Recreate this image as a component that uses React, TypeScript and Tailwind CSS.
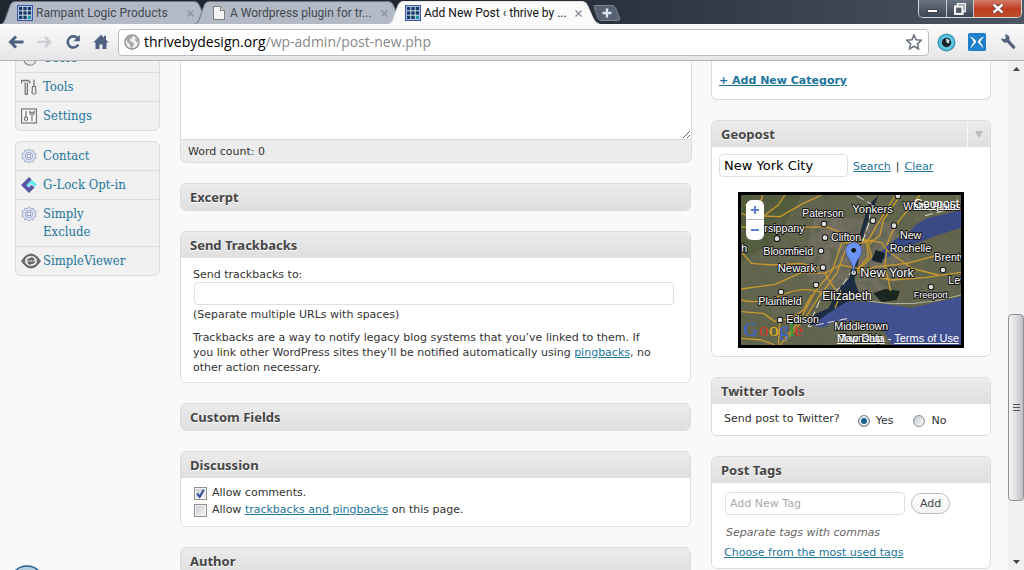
import { useState, type ReactNode } from "react";

const link = "text-[#21759b] underline";

function GridFavicon() {
  return (
    <svg className="h-4 w-4 shrink-0" viewBox="0 0 16 16" aria-hidden="true">
      <rect width="16" height="16" fill="#3a5ba8" />
      <rect x="1.3" y="1.3" width="13.4" height="13.4" fill="#e8eef6" />
      {[2, 6.3, 10.6].map((y) =>
        [2, 6.3, 10.6].map((x) => (
          <rect key={`${x}-${y}`} x={x} y={y} width="3.400" height="3.400" fill={x > 10 && y > 10 ? "#1c9aa8" : "#143a6b"} />
        )),
      )}
    </svg>
  );
}

function PageFavicon() {
  return (
    <svg className="h-4 w-4 shrink-0" viewBox="0 0 16 16" aria-hidden="true">
      <path d="M2.500 1.500h7l4 4v9h-11z" fill="#f4f4f4" stroke="#7d7d7d" />
      <path d="M9.500 1.500v4h4" fill="#d8d8d8" stroke="#7d7d7d" />
    </svg>
  );
}

function Tab({ icon, title, active }: { icon: ReactNode; title: string; active?: boolean }) {
  return (
    <div className={`relative -mr-[18px] flex h-6 w-[212px] shrink-0 items-center pt-0.5 pr-3.5 pl-[17px] ${active ? "z-10" : ""}`}>
      <svg className="absolute inset-0 h-6 w-[212px]" viewBox="0 0 212 24" aria-hidden="true">
        <path
          d="M0 24.5C4 23.5 4.500 21 6 17L10 5.500Q11.500 1.500 15 1.500H194Q198 1.500 199.500 5.500L205 18Q207.500 23.500 212 24.500Z"
          fill={active ? "#fbfbfb" : "#b3bac6"}
          stroke={active ? "#e4e6ea" : "#6d7683"}
        />
      </svg>
      <span className="relative flex">{icon}</span>
      <span className={`relative ml-[3px] min-w-0 flex-1 truncate font-['Roboto',sans-serif] text-[12px] leading-4 ${active ? "text-[#111]" : "text-[#43484f]"}`}>
        {title}
      </span>
      <button type="button" aria-label={`Close ${title}`} className="relative flex h-4 w-4 items-center justify-center">
        <svg className="h-[7px] w-[7px]" viewBox="0 0 7 7">
          <path d="M.5.5l6 6M6.500.5l-6 6" stroke="#8d939d" strokeWidth="1.500" />
        </svg>
      </button>
    </div>
  );
}

function WindowButtons() {
  return (
    <div className="flex h-[18px] overflow-hidden rounded-b-[5px] border border-t-0 border-[#d3d7dc]">
      <button type="button" aria-label="Minimize" className="flex w-7 items-end justify-center border-r border-[#c5cad1] bg-linear-to-b from-[#69737f] to-[#3d4753] pb-1">
        <span className="block h-1 w-[11px] border border-[#444] bg-white" />
      </button>
      <button type="button" aria-label="Restore" className="flex w-[27px] items-center justify-center border-r border-[#c5cad1] bg-linear-to-b from-[#69737f] to-[#3d4753]">
        <svg className="h-3 w-3" viewBox="0 0 12 12">
          <path d="M3.500 3V.8h7.700v7.700H9" fill="none" stroke="#f4f4f4" strokeWidth="1.500" />
          <rect x="1" y="3.500" width="7.500" height="7.500" fill="none" stroke="#f4f4f4" strokeWidth="2.200" />
        </svg>
      </button>
      <button type="button" aria-label="Close" className="flex w-[47px] items-center justify-center bg-linear-to-b from-[#cf7a68] via-[#c03f22] to-[#bf4a2c]">
        <svg className="h-[11px] w-3" viewBox="0 0 12 11">
          <path d="M1.500 1.500l9 8M10.500 1.500l-9 8" stroke="#5b3a38" strokeWidth="4" />
          <path d="M1.500 1.500l9 8M10.500 1.500l-9 8" stroke="#fff" strokeWidth="2.400" />
        </svg>
      </button>
    </div>
  );
}

function TitleBar() {
  return (
    <div className="flex h-6 shrink-0 bg-linear-to-r from-[#20262f] via-[#232a34] to-[#4b5663]">
      <Tab icon={<GridFavicon />} title="Rampant Logic Products" />
      <Tab icon={<PageFavicon />} title="A Wordpress plugin for tr..." />
      <Tab icon={<GridFavicon />} title="Add New Post ‹ thrive by ..." active />
      <button type="button" aria-label="New tab" className="ml-[11px] mt-[5px] flex h-4 w-7">
        <svg className="h-4 w-7" viewBox="0 0 28 16">
          <path d="M1 1.500Q1 .5 2 .5H19Q21.500.5 22.500 3L26.500 12.500Q27.500 15.500 25 15.500H8Q6 15.500 5 13.500Z" fill="#566272" stroke="#7a8593" />
          <path d="M14 3.500v9M9.500 8h9" stroke="#dfe5ee" strokeWidth="2.400" />
        </svg>
      </button>
      <div className="flex-1" />
      <div className="pr-0.5">
        <WindowButtons />
      </div>
    </div>
  );
}

function ToolButton({ label, children, className }: { label: string; children: ReactNode; className?: string }) {
  return (
    <button type="button" aria-label={label} className={`flex h-4 w-4 shrink-0 items-center justify-center ${className ?? ""}`}>
      <svg className="h-4 w-4" viewBox="0 0 16 16">
        {children}
      </svg>
    </button>
  );
}

function Toolbar() {
  return (
    <div className="flex h-[37px] shrink-0 items-center border-b border-[#b3b3ba] bg-linear-to-b from-[#fbfbfb] to-[#e6e6e8] pr-2 pl-2">
      <ToolButton label="Back">
        <path d="M8 2.500L2.500 8 8 13.500M3 8h12.500" fill="none" stroke="#4f6080" strokeWidth="3" />
      </ToolButton>
      <ToolButton label="Forward" className="ml-[13px]">
        <path d="M8 3l5 5-5 5M13 8H.5" fill="none" stroke="#cbced3" strokeWidth="2.600" />
      </ToolButton>
      <ToolButton label="Reload" className="ml-3">
        <path d="M12.500 4.200A5.600 5.600 0 1 0 13.300 10.500" fill="none" stroke="#4f6080" strokeWidth="2.600" />
        <path d="M14.800.8v6.400H8.400z" fill="#4f6080" />
      </ToolButton>
      <ToolButton label="Home" className="ml-3">
        <path d="M8 .8L.3 8.500H2.500V15H6.500V10.500H9.500V15H13.500V8.500H15.700L13 5.800V1.800H11V3.800z" fill="#4f6080" />
      </ToolButton>
      <div className="ml-[9px] flex h-[27px] min-w-0 flex-1 items-center rounded border border-[#b9bcc4] bg-white pr-1.5 pl-[5px]">
        <svg className="h-4 w-4 shrink-0" viewBox="0 0 16 16" aria-hidden="true">
          <circle cx="8" cy="8" r="7" fill="#f2f2f2" stroke="#8f8f8f" strokeWidth="1.400" />
          <path d="M2 4.500L5 1.800 9 1.500 8 4 5.800 5.500 6.500 7.500 9.500 8.500 10 10.500 8 14 6.500 13.500 6 10.500 3.500 8.500ZM11 3L14 6 13.500 9 11.500 7Z" fill="#a9a9a9" />
        </svg>
        <div role="textbox" aria-label="Address" className="ml-1 min-w-0 flex-1 truncate font-['Open_Sans',sans-serif] text-[14px] leading-6 text-[#8a8a8a]">
          <span className="text-black">thrivebydesign.org</span>/wp-admin/post-new.php
        </div>
        <ToolButton label="Bookmark this page">
          <path d="M8 1l2.100 4.800 5.200.5-3.900 3.500 1.100 5.100L8 12.200l-4.500 2.700 1.100-5.100L.7 6.300l5.200-.5z" fill="#fff" stroke="#6d7483" strokeWidth="1.600" />
        </ToolButton>
      </div>
      <button type="button" aria-label="Eye extension" className="ml-2 h-[19px] w-[19px] shrink-0">
        <svg viewBox="0 0 19 19">
          <circle cx="9.500" cy="9.500" r="9" fill="#3b96b5" />
          <circle cx="9.500" cy="9.500" r="7.500" fill="#5cc7e4" />
          <circle cx="9.500" cy="9.500" r="4.700" fill="#20242a" />
          <path d="M9 5.500L12.500 7 12 10.500 9.500 9.500Z" fill="#c9e6ee" />
        </svg>
      </button>
      <button type="button" aria-label="Butterfly extension" className="ml-3 h-[18px] w-[18px] shrink-0">
        <svg viewBox="0 0 18 18">
          <rect width="18" height="18" rx="1.500" fill="#1e81c9" />
          <path d="M1.500 3.500Q6.500 4.500 8.300 9L2.500 15.500Q3.500 11.500 5.800 9.300 4.500 5.500 1.500 3.500ZM16.500 3.500Q11.500 4.500 9.700 9L15.500 15.500Q14.500 11.500 12.200 9.300 13.500 5.500 16.500 3.500Z" fill="#fff" />
        </svg>
      </button>
      <ToolButton label="Settings menu" className="ml-[14px]">
        <path d="M1 4.300L4.500 5.300 6 3.500 4.700.6Q8.500.2 9.500 3.500L9.300 6 15.200 12.500Q15.600 14.800 13.200 15L7 8.600Q2.500 9.500 1 4.300Z" fill="#56627b" />
      </ToolButton>
    </div>
  );
}

const cog = (
  <svg className="h-4 w-4" viewBox="0 0 16 16">
    <path d="M8 .8L9.800 2.700 12.300 2.200 12.900 4.600 15.200 5.800 14 8 15.200 10.200 12.900 11.400 12.300 13.800 9.800 13.300 8 15.200 6.200 13.300 3.700 13.800 3.100 11.400.8 10.200 2 8 .8 5.800 3.100 4.600 3.700 2.200 6.200 2.700Z" fill="#dfe4f2" stroke="#9aa6cc" strokeWidth=".9" />
    <circle cx="8" cy="8" r="3.700" fill="#eef1f9" stroke="#9aa6cc" strokeWidth=".9" />
    <rect x="6.300" y="6.300" width="3.400" height="3.400" fill="#fff" stroke="#8795c2" strokeWidth=".9" />
  </svg>
);

const menuGroups: { label: string; icon: ReactNode }[][] = [
  [
    {
      label: "Users",
      icon: (
        <svg className="h-4 w-4" viewBox="0 0 16 16">
          <circle cx="9" cy="5" r="3.500" fill="#eee" stroke="#888" />
          <path d="M3 11Q4 8.500 9.500 8.500 15 8.500 14 13 12 15.500 9 15.200 5 15 3 11Z" fill="#e8e8e8" stroke="#888" strokeWidth="1.200" />
        </svg>
      ),
    },
    {
      label: "Tools",
      icon: (
        <svg className="h-4 w-4" viewBox="0 0 16 16">
          <path d="M.6 4.500V1.500H7.500L9.500 4M4.200 3.500V15.500M6.400 3.500V15.500H4.200M13 .5V7" fill="none" stroke="#777" strokeWidth="1.300" />
          <path d="M11.500 7.500H14.500L15 14Q13 16.500 11 14Z" fill="#eee" stroke="#777" strokeWidth="1.200" />
        </svg>
      ),
    },
    {
      label: "Settings",
      icon: (
        <svg className="h-4 w-4" viewBox="0 0 16 16">
          <rect x=".6" y="1" width="14.800" height="14" fill="#f8f8f8" stroke="#777" strokeWidth="1.200" />
          <path d="M5 3V9M11 13V8" stroke="#777" strokeWidth="1.300" />
          <circle cx="5" cy="10.800" r="1.700" fill="none" stroke="#777" strokeWidth="1.200" />
          <path d="M8.800 3.500Q8.500 7 11 7 13.500 7 13.200 3.500L11 5Z" fill="none" stroke="#777" strokeWidth="1.200" />
        </svg>
      ),
    },
  ],
  [
    { label: "Contact", icon: cog },
    {
      label: "G-Lock Opt-in",
      icon: (
        <svg className="h-4 w-4" viewBox="0 0 16 16">
          <path d="M8 0L0 8 8 16 13.500 10.500 10.500 7.800 8 10.500 5.500 8 10.800 2.800Z" fill="#5658a6" />
          <path d="M11 3L5.500 8.200 7 9.700 10.500 6.500 13.500 9.800 16 7.500Z" fill="#5ceaf0" />
        </svg>
      ),
    },
    { label: "Simply Exclude", icon: cog },
    {
      label: "SimpleViewer",
      icon: (
        <svg className="h-4 w-5" viewBox="0 0 20 16">
          <path d="M0 8Q5 .5 10 .5T20 8Q15 15.500 10 15.500T0 8Z" fill="#6a6a6a" />
          <ellipse cx="10" cy="8" rx="6" ry="5" fill="#f0f0f0" />
          <path d="M5.500 8.500Q6.500 4.500 10.500 4.700L10.300 3.500 14 6.200 10.800 8.800 10.700 7.300Q8 7 5.500 8.500ZM14.500 7.500Q13.500 11.500 9.500 11.300L9.700 12.500 6 9.800 9.200 7.200 9.300 8.700Q12 9 14.500 7.500Z" fill="#666" />
        </svg>
      ),
    },
  ],
];

function AdminMenu() {
  return (
    <nav className="-mt-[18px] flex w-[145px] shrink-0 flex-col gap-[10px]">
      {menuGroups.map((group, i) => (
        <ul key={i} className="divide-y divide-[#dcdcdc] overflow-hidden rounded-md border border-[#dcdcdc] bg-[#f1f1f1]">
          {group.map((item) => (
            <li key={item.label} className="flex px-[5px] py-[5px]">
              <span className="flex h-[18px] w-[22px] shrink-0 items-center">{item.icon}</span>
              <a href="#" className="max-w-[90px] font-['DejaVu_Serif_Condensed','DejaVu_Serif',serif] text-[13px] leading-[18px] text-[#21759b]">
                {item.label}
              </a>
            </li>
          ))}
        </ul>
      ))}
    </nav>
  );
}

function Box({ title, toggle, children }: { title: string; toggle?: boolean; children?: ReactNode }) {
  return (
    <section className="overflow-hidden rounded-md border border-[#dcdcdc] bg-white">
      <header className="flex bg-linear-to-b from-[#ececec] to-[#dfdfdf]">
        <h3 className="flex-1 pl-[9px] font-['Noto_Sans',sans-serif] text-[13px] leading-[26px] font-bold text-[#464646] [text-shadow:0_1px_0_#fff]">{title}</h3>
        {toggle && (
          <button type="button" aria-label="Toggle panel" className="flex w-[23px] items-center justify-center border-l border-[#f8f8f8]">
            <svg className="h-[7px] w-2" viewBox="0 0 8 7">
              <path d="M0 0h8L4 7z" fill="#bbb" />
            </svg>
          </button>
        )}
      </header>
      {children}
    </section>
  );
}

const field = "h-[23px] rounded border border-[#dfdfdf] bg-white px-1";

function Editor() {
  const [words, setWords] = useState(0);
  return (
    <div className="-mr-px overflow-hidden rounded-b-md border border-t-0 border-[#dcdcdc]">
      <textarea
        aria-label="Post content"
        className="block h-[78px] w-full resize-y bg-white p-2 outline-none"
        onChange={(e) => setWords(e.target.value.split(/\s+/).filter(Boolean).length)}
      />
      <div className="border-t border-[#dcdcdc] bg-[#ececec] px-[7px] pt-0.5 leading-5">Word count: {words}</div>
    </div>
  );
}

function CheckRow({ id, checked, children }: { id: string; checked?: boolean; children: ReactNode }) {
  return (
    <div className="flex items-center leading-[17px]">
      <span className="relative mt-0.5 ml-px flex">
        <input
          id={id}
          type="checkbox"
          defaultChecked={checked}
          className="peer h-[13px] w-[13px] appearance-none border border-[#8e8f8f] bg-linear-to-br from-[#c3c8d1] to-[#fbfbfb] shadow-[inset_0_0_0_1px_#f4f4f4]"
        />
        <svg className="pointer-events-none absolute inset-0 hidden h-[13px] w-[13px] peer-checked:block" viewBox="0 0 13 13" aria-hidden="true">
          <path d="M3.200 6.500L5.700 9.800 9.800 2.800" fill="none" stroke="#3b5599" strokeWidth="2.200" />
        </svg>
      </span>
      <label htmlFor={id} className="ml-[5px]">{children}</label>
    </div>
  );
}

const radioClass =
  "h-3 w-3 appearance-none rounded-full border border-[#8e8f8f] bg-linear-to-br from-[#c3c8d1] to-[#fbfbfb] checked:bg-none checked:bg-[#17638f] checked:shadow-[inset_0_0_0_2px_#e9eef2]";

const roads = [
  "M180 30L160 60 120 90 80 95 48 85",
  "M290 30L235 55 165 95 80 92",
  "M48 125L115 135 230 128 305 125 340 140 420 165 470 172",
  "M48 200L80 235 140 240 230 235 290 250",
  "M48 312L150 298 230 262 300 265 345 240 400 250",
  "M48 345Q100 360 170 330T300 325 345 315",
  "M48 380L115 385 150 410 200 400 235 375 260 330",
  "M430 165L350 175 320 260 270 320 225 405 165 480",
  "M445 165L365 185 335 265 285 330 240 400 180 470",
  "M520 40L475 105 465 150 430 180 440 215 410 245 392 262",
  "M512 30L450 130 425 175 430 215 400 250",
  "M585 30L520 110 500 145 485 180",
  "M470 172L485 195 480 240 497 318",
  "M398 262L455 245 545 235 640 210 708 222",
  "M405 265L500 285 600 278 708 262",
  "M485 195L560 250 640 270",
  "M110 30Q120 55 60 60",
  "M300 262Q310 290 345 330L330 370",
  "M165 400L160 480",
  "M48 460L110 465 150 480",
];

const cities: { name: string; x: number; y: number; size: number; dot?: [number, number] }[] = [
  { name: "Paterson", x: 232, y: 96, size: 31, dot: [297, 117] },
  { name: "Yonkers", x: 382, y: 85, size: 34, dot: [444, 107] },
  { name: "White Plains", x: 535, y: 74, size: 31, dot: [519, 33] },
  { name: "rsippany", x: 118, y: 142, size: 32, dot: [156, 161] },
  { name: "Clifton", x: 318, y: 168, size: 32, dot: [300, 158] },
  { name: "New", x: 525, y: 161, size: 32, dot: [507, 122] },
  { name: "Rochelle", x: 494, y: 200, size: 32 },
  { name: "Bloomfield", x: 115, y: 209, size: 32, dot: [288, 198] },
  { name: "h", x: 49, y: 202, size: 32 },
  { name: "Brentwood", x: 628, y: 227, size: 32, dot: [654, 255] },
  { name: "Newark", x: 158, y: 260, size: 34, dot: [294, 248] },
  { name: "New York", x: 406, y: 277, size: 38, dot: [386, 263] },
  { name: "Levittown", x: 670, y: 297, size: 32, dot: [618, 306] },
  { name: "Elizabeth", x: 292, y: 344, size: 36, dot: [273, 300] },
  { name: "Freeport", x: 566, y: 339, size: 27 },
  { name: "Plainfield", x: 100, y: 361, size: 32, dot: [168, 321] },
  { name: "Edison", x: 184, y: 415, size: 32, dot: [165, 405] },
  { name: "Middletown", x: 328, y: 436, size: 32 },
  { name: "Township", x: 344, y: 472, size: 31 },
];

const google: [string, string, number][] = [
  ["G", "#3a66d8", 56],
  ["o", "#d23a28", 102],
  ["o", "#e8b414", 132],
  ["g", "#3a66d8", 163],
  ["l", "#25a03c", 192],
  ["e", "#d23a28", 208],
];

function GeoMap() {
  return (
    <div className="relative h-[156px] w-[226px] overflow-hidden border-[3px] border-black">
      <svg className="block h-full w-full" viewBox="48 30 660 450" role="img" aria-label="Map of New York City">
        <defs>
          <filter id="terrain" x="0" y="0" width="100%" height="100%">
            <feTurbulence type="fractalNoise" baseFrequency=".035" numOctaves="4" seed="7" />
            <feColorMatrix values="0 0 0 0 .1  0 0 0 0 .12  0 0 0 0 .07  1.500 1.100 0 0 -1.050" />
          </filter>
        </defs>
        <rect x="48" y="30" width="660" height="450" fill="#65664f" />
        <path d="M270 90L500 110 560 230 480 330 290 340 230 250Z" fill="#7a746b" opacity=".7" />
        <path d="M48 30H230L150 170 48 230Z" fill="#45532f" opacity=".6" />
        <rect x="48" y="30" width="660" height="450" filter="url(#terrain)" />
        <path d="M708 75L660 88 610 98 575 118 545 150 515 160 490 180 455 212 440 215 445 232 480 222 520 195 560 180 600 165 640 150 708 128Z" fill="#3a4a84" />
        <path d="M452 195L480 205 470 235 440 225Z" fill="#18222b" />
        <path d="M430 60L462 30 440 80 418 140 398 240 385 300 362 330 350 310 372 280 400 160Z" fill="#1d2e3c" />
        <path d="M350 300L385 275 400 320 370 350 345 375 290 410 250 425 265 390 310 370Z" fill="#1c2d44" />
        <path d="M445 325L480 312 525 318 515 345 470 352Z" fill="#1a261f" />
        <path d="M262 420L310 385 365 350 430 350 560 368 640 350 708 335V480H500L478 440 400 405 330 410 290 428Z" fill="#405090" />
        <path d="M430 348Q560 372 708 330" stroke="#b7b39b" strokeWidth="3" fill="none" />
        <g fill="none" stroke="#c99a2b" strokeWidth="4" strokeLinejoin="round">
          {roads.map((d) => (
            <path key={d} d={d} />
          ))}
        </g>
        <path d="M395 32L440 58 430 120 385 250 350 305 285 345 250 425 370 400M600 92L665 75 708 70" fill="none" stroke="#e4e4dc" strokeWidth="3" strokeDasharray="24 12" />
        <g fontFamily="Liberation Sans, Arial, sans-serif" stroke="#161616" strokeWidth="6" strokeLinejoin="round" paintOrder="stroke" fill="#fff">
          {cities.map((c) => (
            <g key={c.name}>
              {c.dot && <circle cx={c.dot[0]} cy={c.dot[1]} r="7" fill="#ddd" />}
              <text x={c.x} y={c.y} fontSize={c.size}>{c.name}</text>
            </g>
          ))}
        </g>
        <path d="M386 265Q384 237 372 221 362 209 362 196A24 24 0 0 1 410 196Q410 209 400 221 388 237 386 265Z" fill="#6c92f2" stroke="#3d5ba8" strokeWidth="2" />
        <circle cx="386" cy="196" r="7" fill="#111" />
        <g fontFamily="Liberation Serif, Times New Roman, serif" fontSize="58">
          {google.map(([ch, color, x], i) => (
            <text key={i} x={x} y="452" fill={color}>{ch}</text>
          ))}
        </g>
      </svg>
      <div className="absolute top-[5px] left-[5px] flex w-[18px] flex-col divide-y divide-[#bbb] overflow-hidden rounded-md bg-white">
        {["M4 1v6M1 4h6", "M1 4h6"].map((d, i) => (
          <button key={d} type="button" aria-label={i === 0 ? "Zoom in" : "Zoom out"} className="flex h-5 items-center justify-center">
            <svg className="h-2 w-2" viewBox="0 0 8 8">
              <path d={d} stroke="#5d82cf" strokeWidth="2" strokeLinecap="square" />
            </svg>
          </button>
        ))}
      </div>
      <div className="absolute top-0.5 right-[2px] font-['Liberation_Sans',Arial,sans-serif] text-[12px] leading-[14px] text-white">
        <a href="#" className="underline">Geopost</a>
      </div>
      <div className="absolute right-[2px] bottom-0 font-['Liberation_Sans',Arial,sans-serif] text-[11px] leading-[13px] text-white">
        <a href="#" className="underline">Map Data</a> - <a href="#" className="underline">Terms of Use</a>
      </div>
    </div>
  );
}

function MainColumn() {
  return (
    <div className="flex min-w-0 flex-1 flex-col gap-5">
      <Editor />
      <Box title="Excerpt" />
      <Box title="Send Trackbacks">
        <div className="px-3 pt-[9px] pb-[7px]">
          <label htmlFor="trackback" className="block">Send trackbacks to:</label>
          <div className="mb-0.5 flex pr-1 pl-px">
            <input id="trackback" type="text" className={`${field} min-w-0 flex-1`} />
          </div>
          <p>(Separate multiple URLs with spaces)</p>
          <p className="mt-2">
            Trackbacks are a way to notify legacy blog systems that you’ve linked to them. If
            <br />
            you link other WordPress sites they’ll be notified automatically using{" "}
            <a href="#" className={link}>pingbacks</a>, no other action necessary.
          </p>
        </div>
      </Box>
      <Box title="Custom Fields" />
      <Box title="Discussion">
        <div className="px-3 pt-1.5 pb-2">
          <CheckRow id="comments" checked>Allow comments.</CheckRow>
          <CheckRow id="pings">
            Allow <a href="#" className={link}>trackbacks and pingbacks</a> on this page.
          </CheckRow>
        </div>
      </Box>
      <Box title="Author" />
    </div>
  );
}

function SideColumn() {
  return (
    <div className="flex w-[280px] shrink-0 flex-col gap-5">
      <div className="rounded-b-md border border-t-0 border-[#dcdcdc] bg-white px-[7px] pt-3 pb-[11px]">
        <a href="#" className={`${link} font-bold`}>+ Add New Category</a>
      </div>
      <Box title="Geopost" toggle>
        <div className="px-[7px] pt-[7px] pb-2">
          <div className="flex items-center">
            <input type="text" aria-label="Location" defaultValue="New York City" className={`${field} w-[129px] text-[13px] text-black`} />
            <div className="flex gap-[5px] pt-px pl-[5px]">
              <a href="#" className={link}>Search</a>
              <span>|</span>
              <a href="#" className={link}>Clear</a>
            </div>
          </div>
          <div className="mt-[15px] flex justify-center">
            <GeoMap />
          </div>
        </div>
      </Box>
      <Box title="Twitter Tools">
        <fieldset className="flex h-[31px] items-start px-3 pt-[7px]">
          <legend className="float-left">Send post to Twitter?</legend>
          <div className="mt-0.5 ml-[18px] flex items-center">
            <input id="tw-yes" type="radio" name="tw" defaultChecked className={radioClass} />
            <label htmlFor="tw-yes" className="ml-1.5">Yes</label>
            <input id="tw-no" type="radio" name="tw" className={`${radioClass} ml-5`} />
            <label htmlFor="tw-no" className="ml-1.5">No</label>
          </div>
        </fieldset>
      </Box>
      <Box title="Post Tags">
        <div className="px-3 pt-[9px] pb-2">
          <div className="ml-px flex items-center gap-1.5">
            <input type="text" aria-label="Add New Tag" placeholder="Add New Tag" className={`${field} w-[180px] placeholder:text-[#aaa]`} />
            <button type="button" className="h-[21px] rounded-full border border-[#bbb] bg-linear-to-b from-white to-[#f2f2f2] px-2 text-[#464646]">Add</button>
          </div>
          <p className="mt-[10px] ml-0.5 text-[#666] italic">Separate tags with commas</p>
          <a href="#" className={`${link} mt-[5px] block`}>Choose from the most used tags</a>
        </div>
      </Box>
    </div>
  );
}

function ScrollBar() {
  return (
    <div className="flex w-4 shrink-0 flex-col bg-[#f0f0f0]" aria-hidden="true">
      <div className="flex h-4 items-center justify-center">
        <svg className="h-1 w-[7px]" viewBox="0 0 7 4"><path d="M0 4h7L3.500 0z" fill="#444" /></svg>
      </div>
      <div className="flex-[238]" />
      <div className="flex flex-[186] flex-col items-center justify-center gap-0.5 rounded-sm border border-[#8f8f95] bg-linear-to-r from-[#f4f4f5] via-[#dedee1] to-[#bebec4]">
        <span className="h-px w-[7px] bg-[#555]" />
        <span className="h-px w-[7px] bg-[#555]" />
        <span className="h-px w-[7px] bg-[#555]" />
      </div>
      <div className="flex-[53]" />
      <div className="flex h-4 items-center justify-center">
        <svg className="h-1 w-[7px]" viewBox="0 0 7 4"><path d="M0 0h7L3.500 4z" fill="#444" /></svg>
      </div>
    </div>
  );
}

export default function App() {
  return (
    <div className="flex h-screen flex-col overflow-hidden bg-[#f9f9f9] font-['DejaVu_Sans',Verdana,sans-serif] text-[11px] leading-[15px] text-[#333]">
      <TitleBar />
      <Toolbar />
      <div className="relative flex min-h-0 flex-1">
        <main className="flex min-w-0 flex-1 items-start gap-5 overflow-hidden pr-[17px] pl-[15px]">
          <AdminMenu />
          <MainColumn />
          <SideColumn />
        </main>
        <ScrollBar />
        <svg className="absolute bottom-0 left-3 h-[5px] w-[30px]" viewBox="0 0 30 5" aria-hidden="true">
          <circle cx="15" cy="18" r="17" fill="#b4cfe2" stroke="#2c5f8a" strokeWidth="1.500" />
        </svg>
      </div>
    </div>
  );
}
